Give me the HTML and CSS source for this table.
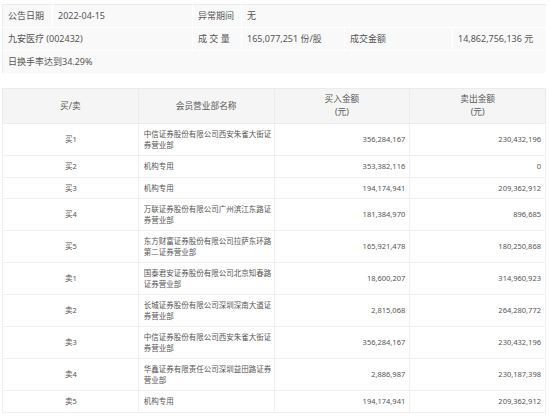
FILE: index.html
```html
<!DOCTYPE html>
<html lang="zh-CN">
<head>
<meta charset="utf-8">
<link rel="stylesheet" href="styles.css">
</head>
<body>
<div class="page">
  <table class="info">
    <colgroup>
      <col class="c1"><col class="c2"><col class="c3"><col class="c4"><col class="c5"><col class="c6">
    </colgroup>
    <tr>
      <td>公告日期</td>
      <td>2022-04-15</td>
      <td>异常期间</td>
      <td colspan="3">无</td>
    </tr>
    <tr>
      <td colspan="2">九安医疗 (002432)</td>
      <td>成 交 量</td>
      <td>165,077,251 份/股</td>
      <td>成交金额</td>
      <td>14,862,756,136 元</td>
    </tr>
    <tr>
      <td colspan="6">日换手率达到34.29%</td>
    </tr>
  </table>

  <table class="deals">
    <thead>
      <tr>
        <th>买/卖</th>
        <th>会员营业部名称</th>
        <th>买入金额<br>(元)</th>
        <th>卖出金额<br>(元)</th>
      </tr>
    </thead>
    <tbody>
      <tr><td class="side">买1</td><td class="name">中信证券股份有限公司西安朱雀大街证券营业部</td><td class="num">356,284,167</td><td class="num">230,432,196</td></tr>
      <tr><td class="side">买2</td><td class="name">机构专用</td><td class="num">353,382,116</td><td class="num">0</td></tr>
      <tr><td class="side">买3</td><td class="name">机构专用</td><td class="num">194,174,941</td><td class="num">209,362,912</td></tr>
      <tr><td class="side">买4</td><td class="name">万联证券股份有限公司广州滨江东路证券营业部</td><td class="num">181,384,970</td><td class="num">896,685</td></tr>
      <tr><td class="side">买5</td><td class="name">东方财富证券股份有限公司拉萨东环路第二证券营业部</td><td class="num">165,921,478</td><td class="num">180,250,868</td></tr>
      <tr><td class="side">卖1</td><td class="name">国泰君安证券股份有限公司北京知春路证券营业部</td><td class="num">18,600,207</td><td class="num">314,960,923</td></tr>
      <tr><td class="side">卖2</td><td class="name">长城证券股份有限公司深圳深南大道证券营业部</td><td class="num">2,815,068</td><td class="num">264,280,772</td></tr>
      <tr><td class="side">卖3</td><td class="name">中信证券股份有限公司西安朱雀大街证券营业部</td><td class="num">356,284,167</td><td class="num">230,432,196</td></tr>
      <tr><td class="side">卖4</td><td class="name">华鑫证券有限责任公司深圳益田路证券营业部</td><td class="num">2,886,987</td><td class="num">230,187,398</td></tr>
      <tr><td class="side">卖5</td><td class="name">机构专用</td><td class="num">194,174,941</td><td class="num">209,362,912</td></tr>
    </tbody>
  </table>
</div>
</body>
</html>
```

FILE: styles.css
```css
html, body {
  margin: 0;
  padding: 0;
  background: #fff;
}

body {
  font-family: "Noto Sans", "Noto Sans CJK SC", sans-serif;
  color: #555;
}

.page {
  padding: 4px 4px 0 2px;
  display: flex;
  flex-direction: column;
  gap: 14px;
}

table {
  border-collapse: collapse;
  width: 544px;
  table-layout: fixed;
}

.info {
  background: #f9f9f9;
  border: 1px solid #ececec;
}

.info .c1 { width: 50px; }
.info .c2 { width: 140px; }
.info .c3 { width: 49px; }
.info .c4 { width: 103px; }
.info .c5 { width: 108px; }
.info .c6 { width: 94px; }

.info td {
  height: 22px;
  padding: 0 5px;
  border: 1px solid #fff;
  font-size: 9px;
  line-height: 12px;
  white-space: nowrap;
}

.info tr:first-child td { border-top-color: #ececec; }
.info td:first-child { border-left-color: #ececec; }

.deals {
  border: 1px solid #ececec;
}

.deals th {
  background: #f5f5f5;
  font-weight: normal;
  font-size: 8.7px;
  line-height: 13px;
  height: 26px;
  padding: 4px 5px;
  border: 1px solid #ececec;
  color: #555;
}

.deals td {
  font-size: 7.5px;
  line-height: 10.5px;
  padding: 5px 4px 5px 5px;
  border: 1px solid #f0f0f0;
  vertical-align: middle;
  color: #555;
}

.deals .side { text-align: center; }
.deals .name { text-align: left; padding-right: 1px; }
.deals .num { text-align: right; }
```
